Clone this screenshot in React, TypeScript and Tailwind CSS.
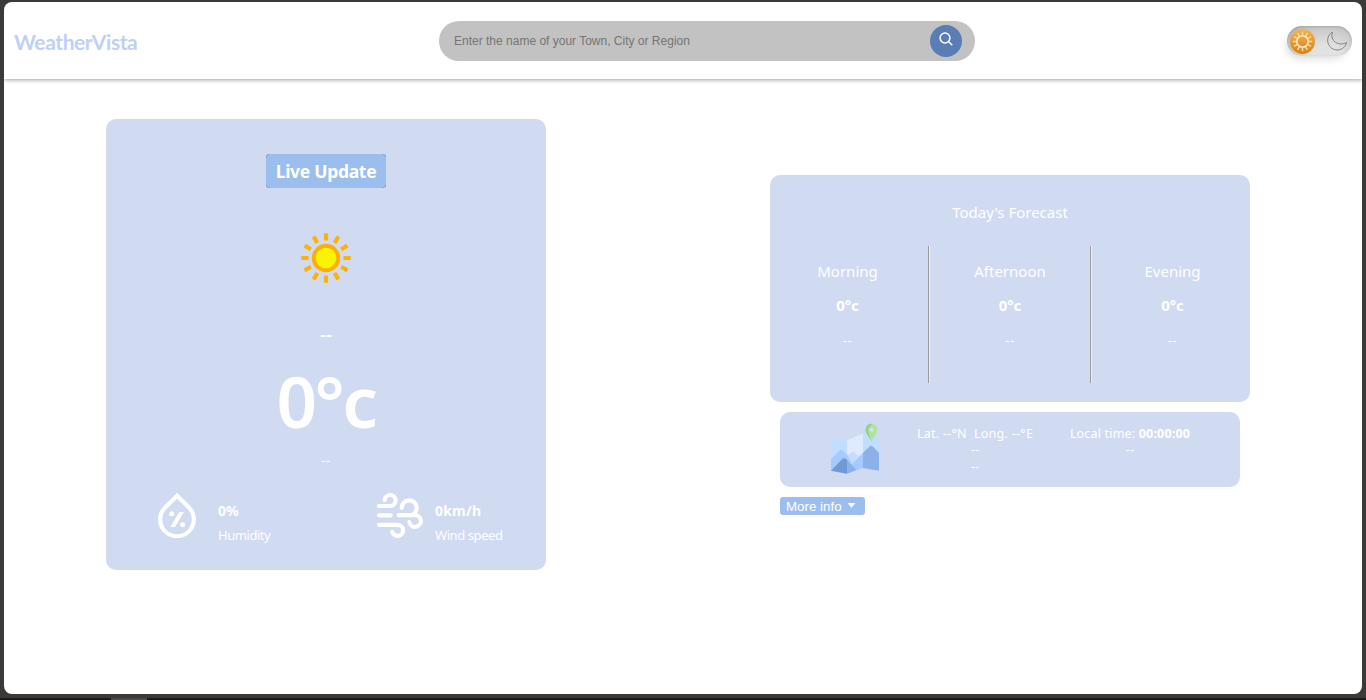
import React from "react";

const HumidityIcon = () => (
  <svg className="h-[46px] w-[40px] shrink-0" viewBox="51 36 120 138" fill="none" stroke="#fff">
    <path d="M111 47 L75.500 82.500 A50.500 50.500 0 1 0 146.500 82.500 Z" strokeWidth="12.500" />
    <path d="M118 96 H132 L105 141 H91Z" fill="#fff" stroke="none" />
    <circle cx="95" cy="101" r="7.500" fill="#fff" stroke="none" />
    <circle cx="128" cy="134" r="7.500" fill="#fff" stroke="none" />
  </svg>
);

const WindIcon = () => (
  <svg className="h-[47px] w-[47px] shrink-0" viewBox="51 36 141 141" fill="none" stroke="#fff" strokeWidth="12.500" strokeLinecap="round">
    <path d="M57 78 H91 A16.500 16.500 0 1 0 74 60" />
    <path d="M57 106 H92" />
    <path d="M125 84 A22.500 22.500 0 1 1 152 105.500" />
    <path d="M116 105.500 H164 A17.500 17.500 0 1 1 148 126" />
    <path d="M57 134.500 H112 A16.500 16.500 0 1 1 97 156" />
  </svg>
);

const rays = [0, 30, 60, 90, 120, 150, 180, 210, 240, 270, 300, 330];

const SunIcon = () => (
  <svg className="h-[50px] w-[50px]" viewBox="0 0 50 50">
    {rays.map((a) => (
      <rect key={a} x="22.900" y="0.200" width="4.200" height="7.400" rx=".6" fill="#fdb209" transform={`rotate(${a} 25 25)`} />
    ))}
    <circle cx="25" cy="25" r="14.200" fill="#feae08" />
    <circle cx="25" cy="25" r="10.300" fill="#f9f403" />
  </svg>
);

const MapIcon = () => (
  <svg className="h-[52px] w-[50px]" viewBox="210 69 150 156">
    <path d="M213 111 L261 121 V221 L213 212Z" fill="#c2ddff" />
    <path d="M261 121 L309 101 V204 L261 221Z" fill="#deebff" />
    <path d="M309 101 L357 113 V212 L309 204Z" fill="#c2ddff" />
    <path d="M261 168 L279 153 L296 169 L275 192 L261 190Z" fill="#c2ddff" />
    <path d="M213 178 L238 152 Q243 147 249 152 L261 163 V221 L213 212Z" fill="#a4caff" />
    <path d="M261 163 L275 192 L309 158 V204 L261 221Z" fill="#a4caff" />
    <path d="M309 158 L328 140 Q333 135 339 140 L357 158 V212 L309 204Z" fill="#8bb1e8" />
    <path d="M213 212 L247 177 Q252 172 258 177 L261 180 V221Z" fill="#7199d6" />
    <path d="M261 180 L289 210 L261 221Z" fill="#8bb1e8" />
    <path d="M334 126 C330 110 317 103 317 89 A17 17 0 0 1 352 89 C352 103 338 110 334 126Z" fill="#afe49b" />
    <path d="M334 126 C330 110 317 103 317 89 A17 17 0 0 1 338 72 C325 79 321 92 327 102Z" fill="#8ed08c" />
    <circle cx="335" cy="89" r="6" fill="#d0e3ee" />
  </svg>
);

const ThemeToggle = () => (
  <div className="flex h-[30px] w-[65px] items-center justify-between rounded-full bg-[radial-gradient(ellipse_at_60%_100%,#e2e2e2_25%,#c4c4c4_75%,#adadad_100%)] pr-1 pl-[3px] shadow-[-3px_5px_8px_-3px_rgba(0,0,0,0.16),inset_0_1px_3px_rgba(0,0,0,0.16)]">
    <div className="flex size-[25px] items-center justify-center rounded-full bg-linear-to-b from-[#f2b452] to-[#d88209]">
      <svg className="size-[21px]" viewBox="0 0 21 21" fill="none">
        {rays.map((a) => (
          <path key={a} d="M10.500 .7 V4.200" stroke="#f8d9a6" strokeWidth="1.500" transform={`rotate(${a} 10.500 10.500)`} />
        ))}
        <circle cx="10.500" cy="10.500" r="5.700" stroke="#fff4de" strokeWidth="1.300" />
      </svg>
    </div>
    <svg className="size-[22px]" viewBox="180 90 66 66" fill="none" stroke="#858585" strokeWidth="3">
      <path d="M199 96 A29 29 0 1 0 242 128 C216 140 191 123 199 96Z" strokeLinejoin="round" />
    </svg>
  </div>
);

const Period = ({ name, className }: { name: string; className: string }) => (
  <div className={`flex h-[138px] flex-col items-center ${className}`}>
    <p className="mt-[15px] text-[15px] leading-[22px]">{name}</p>
    <p className="mt-[12px] text-[15px] leading-[22px] font-bold">0°c</p>
    <p className="mt-[14px] text-[13px] leading-[20px] tracking-[0.500px]">--</p>
  </div>
);

export default function App() {
  return (
    <div className="flex h-[700px] w-[1366px] flex-col overflow-hidden bg-[#3b3a39] font-['Noto_Sans','Open_Sans',sans-serif] text-white">
      <div className="mx-1 mt-[2px] flex h-[692px] shrink-0 flex-col overflow-hidden rounded-[8px] bg-white">
        <header className="flex h-[77px] shrink-0 items-center justify-between pr-[10px] pl-[10px] shadow-[0_1px_4px_rgba(0,0,0,0.38)]">
          <h1 className="w-[288px] pt-[2px] font-['Lato',sans-serif] text-[21px] leading-[26px] font-bold tracking-[-0.420px] text-[#bfd0f5]">WeatherVista</h1>
          <div className="flex h-[40px] w-[536px] items-center justify-between rounded-full bg-[#c2c2c2] pr-[13px] pl-[15px]">
            <span className="font-['Liberation_Sans',Arial,sans-serif] text-[12px] text-[#757575]">Enter the name of your Town, City or Region</span>
            <button className="flex size-8 items-center justify-center rounded-full bg-[#5a7db5]">
              <svg className="mb-[3px] size-[14px]" viewBox="0 0 14 14" fill="none" stroke="#fff" strokeWidth="1.500">
                <circle cx="6" cy="6" r="4.900" />
                <path d="M9.500 9.500 L13.300 13.300" />
              </svg>
            </button>
          </div>
          <div className="flex w-[240px] justify-end pt-[1px]">
            <ThemeToggle />
          </div>
        </header>

        <main className="flex items-start justify-between pt-[40px] pr-[112px] pl-[102px]">
          <section className="flex h-[451px] w-[440px] flex-col items-center rounded-[10px] bg-[#d0daf1] pt-[35px]">
            <div className="rounded-[3px] bg-[#8798b6]">
              <h2 className="flex h-[34px] w-[120px] items-center justify-center rounded-[5px] bg-[#9bbeee] text-[17.500px] font-bold tracking-[-0.300px]">Live Update</h2>
            </div>
            <div className="mt-[45px]"><SunIcon /></div>
            <p className="mt-[39px] text-[18px] leading-[24px] font-semibold">--</p>
            <p className="mt-[13px] text-[71px] leading-[84px] font-semibold tracking-[-2.500px]">0°c</p>
            <p className="mt-[7px] text-[13px] leading-[20px] tracking-[0.500px]">--</p>
            <div className="mt-[22px] flex w-full pl-[51px]">
              <div className="flex w-[220px] gap-[21px]">
                <HumidityIcon />
                <div className="pt-[9px]">
                  <p className="text-[14px] leading-[20px] font-bold">0%</p>
                  <p className="mt-[4px] text-[13px] leading-[20px] tracking-[-0.450px]">Humidity</p>
                </div>
              </div>
              <div className="flex gap-[11px]">
                <WindIcon />
                <div className="pt-[9px]">
                  <p className="text-[14px] leading-[20px] font-bold tracking-[0.200px]">0km/h</p>
                  <p className="mt-[4px] text-[13px] leading-[20px] tracking-[-0.420px]">Wind speed</p>
                </div>
              </div>
            </div>
          </section>

          <div className="mt-[56px] flex w-[480px] flex-col">
            <section className="h-[227px] rounded-[10px] bg-[#d0daf1] pt-[26px]">
              <h3 className="text-center text-[15px] leading-[22px]">Today's Forecast</h3>
              <div className="mt-[22px] flex">
                <Period name="Morning" className="w-[158px] pr-[3px]" />
                <div className="mt-px h-[137px] w-[2px] border-r border-l border-l-[#9a9a9a] border-r-[#eeeeee]" />
                <Period name="Afternoon" className="w-[160px]" />
                <div className="mt-px h-[137px] w-[2px] border-r border-l border-l-[#9a9a9a] border-r-[#eeeeee]" />
                <Period name="Evening" className="w-[158px] pl-[3px]" />
              </div>
            </section>
            <section className="mx-[10px] mt-[10px] flex h-[75px] rounded-[10px] bg-[#d0daf1] pt-[11px] pl-[50px]">
              <MapIcon />
              <div className="ml-[20px] w-[150px] pt-[2px] text-center text-[12.500px] leading-[17px] tracking-[0.270px] whitespace-pre">
                <p>{"Lat. --°N  Long. --°E"}</p>
                <p className="-mt-px">--</p>
                <p>--</p>
              </div>
              <div className="ml-[5px] w-[150px] pt-[2px] text-center text-[12.500px] leading-[17px] tracking-[0.180px] whitespace-nowrap">
                <p>Local time: <b>00:00:00</b></p>
                <p className="-mt-px">--</p>
              </div>
            </section>
            <button className="mt-[10px] ml-[10px] flex h-[18px] w-[85px] items-center rounded-[3px] bg-[#9bbeee] pt-px pl-[6px] font-['Liberation_Sans',Arial,sans-serif] text-[13.333px] leading-[17px]">
              More info
              <svg className="mb-[3px] ml-[5px] h-[5px] w-[9px]" viewBox="0 0 9 5"><path d="M.5 0 H8.500 L4.500 4.700Z" fill="#fff" /></svg>
            </button>
          </div>
        </main>
      </div>
      <div className="mt-1 flex h-[2px] shrink-0 bg-[#1e1c1b] pl-[111px]">
        <div className="h-[2px] w-[36px] bg-[#4b4a49]" />
      </div>
    </div>
  );
}
